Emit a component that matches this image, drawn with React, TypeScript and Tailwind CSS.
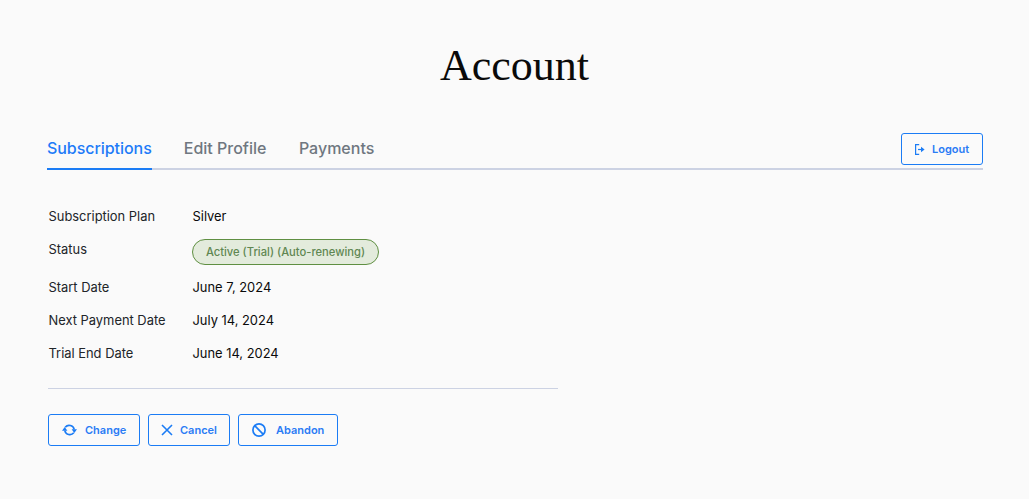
import React from "react";

const Row = ({ label, children, cls }: { label: string; children: React.ReactNode; cls: string }) => (
  <div className={`flex items-start ${cls}`}>
    <div className="w-[144px] pt-px text-[12.9px] leading-[20px] text-[#212529]">{label}</div>
    <div className="text-[12.9px] leading-[21px] font-normal text-[#0b0b0b]">{children}</div>
  </div>
);

const Btn = ({ icon, label, cls }: { icon: React.ReactNode; label: string; cls: string }) => (
  <button className={`flex h-[32px] items-center rounded-[3px] border border-[#1b7cf5] text-[11px] font-semibold text-[#2a7cf5] ${cls}`}>
    {icon}
    <span>{label}</span>
  </button>
);

const SyncIcon = () => (
  <svg width="15" height="12" viewBox="0 0 15 12" fill="none" stroke="#1b7cf5" strokeWidth="1.7" className="shrink-0">
    <path d="M3.2 3.2A5.2 5.2 0 0 1 12.2 5.4" />
    <path d="M11.8 8.8A5.2 5.2 0 0 1 2.8 6.6" />
    <path d="M0 6.8h5.4L2.7 3z" fill="#1b7cf5" stroke="none" />
    <path d="M15 5.2H9.6L12.3 9z" fill="#1b7cf5" stroke="none" />
  </svg>
);
const XIcon = () => (
  <svg width="12" height="12" viewBox="0 0 12 12" fill="none" stroke="#1b7cf5" strokeWidth="1.6" className="shrink-0">
    <path d="M1 1l10 10M11 1L1 11" />
  </svg>
);
const BanIcon = () => (
  <svg width="14" height="14" viewBox="0 0 14 14" fill="none" stroke="#1b7cf5" strokeWidth="1.7" className="shrink-0">
    <circle cx="7" cy="7" r="6.1" />
    <path d="M2.7 2.7l8.6 8.6" />
  </svg>
);
const LogoutIcon = () => (
  <svg width="10" height="11" viewBox="0 0 10 11" fill="none" stroke="#1b7cf5" strokeWidth="1.2" className="shrink-0">
    <path d="M4.2 .6H.6v9.8h3.6" />
    <path d="M3 5.5h3.5" />
    <path d="M6 2.8l3.6 2.7L6 8.2z" fill="#1b7cf5" stroke="none" />
  </svg>
);

export default function App() {
  return (
    <div className="min-h-[499px] bg-[#fafafa] font-['Inter',sans-serif]">
      <div className="flex h-[133px] justify-center pt-[36px]">
        <h1 className="font-['Liberation_Serif',serif] text-[44px] leading-[60px] font-normal text-[#0a0a0a]">
          Account
        </h1>
      </div>
      <div className="mx-[47px] mr-[46px] flex h-[37px] items-start justify-between border-b-2 border-[#ccd2e3]">
        <div className="flex gap-[32px]">
          <div className="-mb-[2px] h-[37px] border-b-[2px] border-[#1b7cf5] pt-[5px] text-[16px] leading-[20px] font-[450] tracking-[-0.05px] text-[#1e7bf8]">Subscriptions</div>
          <div className="pt-[5px] text-[16px] leading-[20px] font-[450] text-[#6f7780]">Edit Profile</div>
          <div className="ml-[0.5px] pt-[5px] text-[16px] leading-[20px] font-[450] text-[#6f7780]">Payments</div>
        </div>
        <Btn icon={<LogoutIcon />} label="Logout" cls="w-[82px] gap-[7px] pl-[13px]" />
      </div>
      <div className="ml-[48.5px] mt-[36px]">
        <Row label="Subscription Plan" cls="h-[33px]">Silver</Row>
        <div className="flex h-[38px] items-start">
          <div className="w-[144px] pt-px text-[12.9px] leading-[20px] text-[#212529]">Status</div>
          <span className="-ml-[0.5px] flex h-[26px] w-[187px] items-center justify-center rounded-full border border-[#5f8f42] bg-[#e3ebdc] text-[11.2px] font-medium text-[#5f8752]">
            Active (Trial) (Auto-renewing)
          </span>
        </div>
        <Row label="Start Date" cls="h-[33px]">June 7, 2024</Row>
        <Row label="Next Payment Date" cls="h-[33px]">July 14, 2024</Row>
        <Row label="Trial End Date" cls="h-[33px]">June 14, 2024</Row>
      </div>
      <div className="ml-[48px] mt-[12px] h-px w-[510px] bg-[#ccd2e3]" />
      <div className="ml-[48px] mt-[25px] flex gap-[8px]">
        <Btn icon={<SyncIcon />} label="Change" cls="w-[92px] gap-[8px] pl-[13px]" />
        <Btn icon={<XIcon />} label="Cancel" cls="w-[82px] gap-[7px] pl-[12px]" />
        <Btn icon={<BanIcon />} label="Abandon" cls="w-[100px] gap-[10px] pl-[13px]" />
      </div>
    </div>
  );
}
